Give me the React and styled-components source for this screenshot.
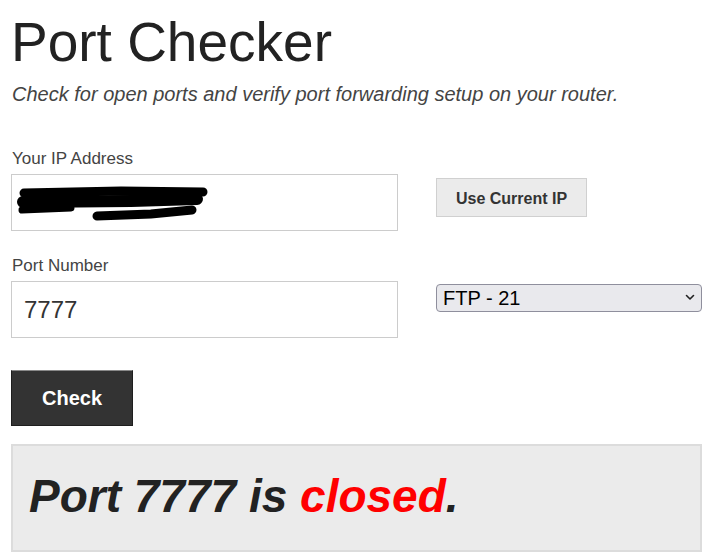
import React from "react";
import styled, { createGlobalStyle } from "styled-components";

const Global = createGlobalStyle`
  html, body { margin: 0; padding: 0; background: #fff; }
  body { font-family: "Liberation Sans", Arial, sans-serif; color: #222; }
`;

const Page = styled.main`
  padding: 11px 14px 0 11px;
  width: 716px;
  box-sizing: border-box;
`;

const Title = styled.h1`
  margin: 0;
  font-size: 55px;
  font-weight: 400;
  line-height: 63px;
  color: #222;
`;

const Subtitle = styled.p`
  margin: 9px 0 0 1px;
  font-size: 20px;
  line-height: 23px;
  font-style: italic;
  color: #444;
`;

const Form = styled.form`
  margin-top: 43px;
  display: grid;
  grid-template-columns: 387px 266px;
  column-gap: 38px;
`;

const Label = styled.label`
  grid-column: 1;
  display: block;
  font-size: 17px;
  line-height: 20px;
  color: #444;
  margin: ${(p) => p.$top || 0}px 0 5px 1px;
`;

const InputWrap = styled.div`
  grid-column: 1;
  position: relative;
`;

const TextInput = styled.input`
  display: block;
  width: 100%;
  height: 57px;
  box-sizing: border-box;
  border: 1px solid #ccc;
  background: #fff;
  padding: 0 12px;
  font-family: "Liberation Sans", Arial, sans-serif;
  font-size: 24px;
  color: #333;
  outline: none;
`;

const Redaction = styled.svg`
  position: absolute;
  left: 0;
  top: 0;
  pointer-events: none;
`;

const SideCell = styled.div`
  grid-column: 2;
  align-self: start;
  margin-top: ${(p) => p.$top}px;
  position: relative;
`;

const GrayButton = styled.button`
  height: 39px;
  width: 151px;
  box-sizing: border-box;
  border: 1px solid #d0d0d0;
  background: #ebebeb;
  color: #333;
  font-family: "Liberation Sans", Arial, sans-serif;
  font-weight: 700;
  font-size: 16px;
  padding: 2px 0 0;
  cursor: pointer;
`;

const Select = styled.select`
  appearance: none;
  -webkit-appearance: none;
  display: block;
  width: 266px;
  height: 28px;
  box-sizing: border-box;
  border: 1px solid #8f8f9d;
  border-radius: 4px;
  background: #e9e9ed;
  color: #000;
  font-family: "Liberation Sans", Arial, sans-serif;
  font-size: 20px;
  padding: 0 24px 0 6px;
  line-height: 26px;
  outline: none;
`;

const Chevron = styled.svg`
  position: absolute;
  right: 7px;
  top: 10px;
  pointer-events: none;
`;

const CheckButton = styled.button`
  grid-column: 1;
  justify-self: start;
  margin-top: 32px;
  width: 122px;
  height: 56px;
  box-sizing: border-box;
  background: #333;
  color: #fff;
  border: 1px solid #1e1e1e;
  border-top-color: #8a8a8a;
  font-family: "Liberation Sans", Arial, sans-serif;
  font-weight: 700;
  font-size: 20px;
  padding: 0;
  cursor: pointer;
`;

const Result = styled.section`
  margin-top: 18px;
  width: 691px;
  box-sizing: border-box;
  background: #ebebeb;
  border: 2px solid #dcdcdc;
  padding: 24px 16px 27px;
`;

const ResultText = styled.h2`
  margin: 0;
  font-size: 46px;
  line-height: 53px;
  font-weight: 700;
  font-style: italic;
  color: #222;
`;

const Status = styled.span`
  color: ${(p) => (p.$open ? "#1a9a1a" : "#ff0000")};
`;

export default function App() {
  return (
    <Page>
      <Global />
      <Title>Port Checker</Title>
      <Subtitle>Check for open ports and verify port forwarding setup on your router.</Subtitle>
      <Form onSubmit={(e) => e.preventDefault()}>
        <Label htmlFor="ip">Your IP Address</Label>
        <InputWrap>
          <TextInput id="ip" type="text" defaultValue="" />
          <Redaction width="210" height="57" viewBox="0 0 210 57">
            <g stroke="#000" strokeLinecap="round" fill="none">
              <path d="M13 19 L110 17 L192 18" strokeWidth="9" />
              <path d="M12 28 L120 27 L186 25" strokeWidth="12" />
              <path d="M11 36 L60 34" strokeWidth="7" />
              <path d="M86 42 L140 40 L181 36" strokeWidth="9" />
            </g>
          </Redaction>
        </InputWrap>
        <SideCell $top={4} style={{ gridRow: 2 }}>
          <GrayButton type="button">Use Current IP</GrayButton>
        </SideCell>

        <Label htmlFor="port" $top={25}>Port Number</Label>
        <InputWrap>
          <TextInput id="port" type="text" defaultValue="7777" />
        </InputWrap>
        <SideCell $top={3} style={{ gridRow: 4 }}>
          <Select defaultValue="21">
            <option value="21">FTP - 21</option>
            <option value="22">SSH - 22</option>
            <option value="80">HTTP - 80</option>
            <option value="443">HTTPS - 443</option>
          </Select>
          <Chevron width="10" height="7" viewBox="0 0 10 7">
            <path d="M1.5 1.5 L5 5 L8.5 1.5" stroke="#222" strokeWidth="1.6" fill="none" strokeLinecap="round" strokeLinejoin="round" />
          </Chevron>
        </SideCell>

        <CheckButton type="submit">Check</CheckButton>
      </Form>
      <Result>
        <ResultText>
          Port 7777 is <Status>closed</Status>.
        </ResultText>
      </Result>
    </Page>
  );
}
